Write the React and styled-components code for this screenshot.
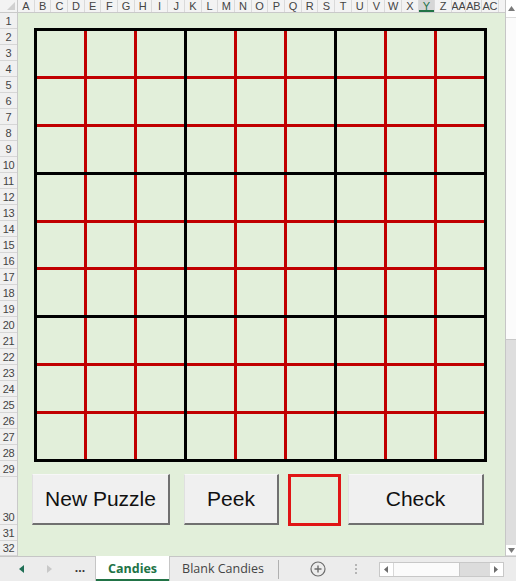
import React from "react";
import styled, { createGlobalStyle } from "styled-components";

const GREEN = "#e2efda";
const EXCEL = "#217346";

const COLUMNS = [..."ABCDEFGHIJKLMNOPQRSTUVWXYZ"]
    .map(l => ({ label: l, width: 16.7 }))
    .concat([
        { label: "AA", width: 14 },
        { label: "AB", width: 16 },
        { label: "AC", width: 17 },
    ]);

// row 30 holds the buttons, so it is taller
const ROWS = Array.from({ length: 32 }, (_, i) => ({
    label: i + 1,
    height: i === 29 ? 48 : i === 31 ? 15 : 16,
}));

const GlobalStyle = createGlobalStyle`
    html, body {
        margin: 0;
        padding: 0;
        background: #ffffff;
        overflow: hidden;
    }
    * { box-sizing: border-box; }
`;

const App = () => {
    return (
        <React.Fragment>
            <GlobalStyle />
            <Window>
                <Body>
                    <SheetArea>
                        <HeaderRow>
                            <Corner />
                            <ColumnHeaders>
                                {COLUMNS.map(c => (
                                    <ColHeader key={c.label} $w={c.width} $selected={c.label === "Y"}>
                                        {c.label}
                                    </ColHeader>
                                ))}
                            </ColumnHeaders>
                        </HeaderRow>
                        <Main>
                            <RowHeaders>
                                {ROWS.map(r => (
                                    <RowHeader key={r.label} $h={r.height}>{r.label}</RowHeader>
                                ))}
                            </RowHeaders>
                            <Canvas>
                                <Board>
                                    {Array.from({ length: 9 }).map((_, b) => (
                                        <Block key={b}>
                                            {Array.from({ length: 9 }).map((_, c) => <Cell key={c} />)}
                                        </Block>
                                    ))}
                                </Board>
                                <ButtonRow>
                                    <SheetButton $w={138}>New Puzzle</SheetButton>
                                    <SheetButton $w={95} $ml={14}>Peek</SheetButton>
                                    <RedBox />
                                    <SheetButton $w={136} $ml={7}>Check</SheetButton>
                                </ButtonRow>
                            </Canvas>
                        </Main>
                    </SheetArea>
                    <VScroll>
                        <ScrollArrow $h={18}>
                            <svg width="7" height="5" viewBox="0 0 7 5"><polygon points="0,5 7,5 3.5,0" fill="#7a7a7a" /></svg>
                        </ScrollArrow>
                        <VThumb />
                        <VTrack />
                        <ScrollArrow $h={11}>
                            <svg width="7" height="5" viewBox="0 0 7 5"><polygon points="0,0 7,0 3.5,5" fill="#7a7a7a" /></svg>
                        </ScrollArrow>
                    </VScroll>
                </Body>
                <TabBar>
                    <NavButton>
                        <svg width="5" height="8" viewBox="0 0 5 8"><polygon points="5,0 5,8 0,4" fill="#1f6e55" /></svg>
                    </NavButton>
                    <NavButton>
                        <svg width="5" height="8" viewBox="0 0 5 8"><polygon points="0,0 0,8 5,4" fill="#c8c8c8" /></svg>
                    </NavButton>
                    <Ellipsis>...</Ellipsis>
                    <SheetTab $active>Candies</SheetTab>
                    <SheetTab>Blank Candies</SheetTab>
                    <TabDivider />
                    <AddSheet>
                        <svg width="16" height="16" viewBox="0 0 16 16">
                            <circle cx="8" cy="8" r="7" fill="none" stroke="#6d6d6d" strokeWidth="1.2" />
                            <path d="M8 4.5v7M4.5 8h7" stroke="#6d6d6d" strokeWidth="1.4" />
                        </svg>
                    </AddSheet>
                    <Grip>
                        <span /><span /><span />
                    </Grip>
                    <HScroll>
                        <HArrow>
                            <svg width="4" height="7" viewBox="0 0 4 7"><polygon points="4,0 4,7 0,3.5" fill="#6d6d6d" /></svg>
                        </HArrow>
                        <HThumb />
                        <HTrack />
                        <HArrow>
                            <svg width="4" height="7" viewBox="0 0 4 7"><polygon points="0,0 0,7 4,3.5" fill="#6d6d6d" /></svg>
                        </HArrow>
                    </HScroll>
                </TabBar>
            </Window>
        </React.Fragment>
    );
};

export default App;

const Window = styled.div`
    width: 516px;
    height: 581px;
    display: flex;
    flex-direction: column;
    font-family: "Liberation Sans", Arial, sans-serif;
    background: #ffffff;
`;

const Body = styled.div`
    display: flex;
    height: 556px;
`;

const SheetArea = styled.div`
    width: 505px;
    display: flex;
    flex-direction: column;
`;

const HeaderRow = styled.div`
    display: flex;
    height: 13px;
`;

const Corner = styled.div`
    position: relative;
    width: 18px;
    background: #f3f3f3;
    border-right: 1px solid #c9c9c9;
    border-bottom: 1px solid #c9c9c9;
    &::after {
        content: "";
        position: absolute;
        right: 2px;
        bottom: 2px;
        border-left: 8px solid transparent;
        border-bottom: 8px solid #d0d0d0;
    }
`;

const ColumnHeaders = styled.div`
    flex: 1;
    display: flex;
    background: #f3f3f3;
    border-bottom: 1px solid #c9c9c9;
    overflow: hidden;
`;

const ColHeader = styled.div`
    flex: 0 0 ${p => p.$w}px;
    display: flex;
    align-items: center;
    justify-content: center;
    border-right: 1px solid #dadada;
    font-size: 11px;
    line-height: 12px;
    color: ${p => p.$selected ? EXCEL : "#444"};
    background: ${p => p.$selected ? "#d6d6d6" : "transparent"};
    box-shadow: ${p => p.$selected ? `inset 0 -2px 0 ${EXCEL}` : "none"};
    overflow: hidden;
    white-space: nowrap;
    letter-spacing: -0.3px;
`;

const Main = styled.div`
    flex: 1;
    display: flex;
`;

const RowHeaders = styled.div`
    width: 18px;
    display: flex;
    flex-direction: column;
    background: #f0f0f0;
    border-right: 1px solid #c9c9c9;
`;

const RowHeader = styled.div`
    height: ${p => p.$h}px;
    display: flex;
    align-items: flex-end;
    justify-content: center;
    border-bottom: 1px solid #d6d6d6;
    font-size: 11px;
    line-height: 14px;
    color: #444;
    overflow: hidden;
    letter-spacing: -0.3px;
`;

const Canvas = styled.div`
    flex: 1;
    background: ${GREEN};
    padding: 15px 0 0 14px;
`;

const Board = styled.div`
    width: 453px;
    height: 434px;
    margin-left: 2px;
    padding: 3px;
    display: grid;
    grid-template-columns: repeat(3, 1fr);
    grid-template-rows: repeat(3, 1fr);
    gap: 3px;
    background: #000000;
`;

const Block = styled.div`
    display: grid;
    grid-template-columns: repeat(3, 1fr);
    grid-template-rows: repeat(3, 1fr);
    gap: 3px;
    background: #c00000;
`;

const Cell = styled.div`
    background: ${GREEN};
`;

const ButtonRow = styled.div`
    display: flex;
    align-items: flex-start;
    margin-top: 12px;
`;

const SheetButton = styled.div`
    width: ${p => p.$w}px;
    height: 51px;
    margin-left: ${p => p.$ml || 0}px;
    display: flex;
    align-items: center;
    justify-content: center;
    background: #f0f0f0;
    border-top: 1px solid #f7f7f7;
    border-left: 1px solid #e0e0e0;
    border-right: 2px solid #707070;
    border-bottom: 2px solid #707070;
    font-size: 21px;
    color: #111111;
`;

const RedBox = styled.div`
    width: 53px;
    height: 52px;
    margin-left: 9px;
    border: 3px solid #e01414;
`;

const VScroll = styled.div`
    width: 11px;
    display: flex;
    flex-direction: column;
    background: #e8e8e8;
    border-left: 1px solid #c6c6c6;
`;

const ScrollArrow = styled.div`
    height: ${p => p.$h}px;
    display: flex;
    align-items: center;
    justify-content: center;
    background: #ffffff;
    border-bottom: 1px solid #dcdcdc;
`;

const VThumb = styled.div`
    height: 322px;
    background: #fbfbfb;
    border-bottom: 1px solid #c8c8c8;
`;

const VTrack = styled.div`
    flex: 1;
    background: #dedede;
`;

const TabBar = styled.div`
    height: 25px;
    display: flex;
    align-items: stretch;
    background: #ececec;
    border-top: 1px solid #c6c6c6;
    font-family: "Open Sans", "Noto Sans", sans-serif;
`;

const NavButton = styled.div`
    width: 14px;
    margin-left: 14px;
    display: flex;
    align-items: center;
    justify-content: center;
`;

const Ellipsis = styled.div`
    width: 30px;
    margin-left: 9px;
    display: flex;
    align-items: center;
    justify-content: center;
    font-size: 12px;
    font-weight: bold;
    color: #333;
    padding-bottom: 3px;
`;

const SheetTab = styled.div`
    display: flex;
    align-items: center;
    padding: 0 12px;
    font-size: 12.5px;
    font-weight: ${p => p.$active ? 700 : 400};
    color: ${p => p.$active ? EXCEL : "#444"};
    background: ${p => p.$active ? "#ffffff" : "transparent"};
    border-left: ${p => p.$active ? "1px solid #c6c6c6" : "none"};
    border-right: ${p => p.$active ? "1px solid #c6c6c6" : "none"};
    box-shadow: ${p => p.$active ? `inset 0 -2px 0 ${EXCEL}` : "none"};
    margin-top: -1px;
`;

const TabDivider = styled.div`
    width: 1px;
    margin: 3px 0 2px 2px;
    background: #b0b0b0;
`;

const AddSheet = styled.div`
    width: 16px;
    margin-left: 31px;
    display: flex;
    align-items: center;
`;

const Grip = styled.div`
    width: 3px;
    margin-left: 29px;
    display: flex;
    flex-direction: column;
    justify-content: center;
    gap: 2px;
    & > span {
        width: 2px;
        height: 2px;
        background: #b5b5b5;
    }
`;

const HScroll = styled.div`
    display: flex;
    align-self: center;
    height: 15px;
    width: 125px;
    margin-left: 21px;
    border: 1px solid #c8c8c8;
    background: #dcdcdc;
`;

const HArrow = styled.div`
    width: 13px;
    display: flex;
    align-items: center;
    justify-content: center;
    background: #ffffff;
`;

const HThumb = styled.div`
    width: 67px;
    background: #fbfbfb;
    border-left: 1px solid #d8d8d8;
    border-right: 1px solid #c8c8c8;
`;

const HTrack = styled.div`
    flex: 1;
`;
